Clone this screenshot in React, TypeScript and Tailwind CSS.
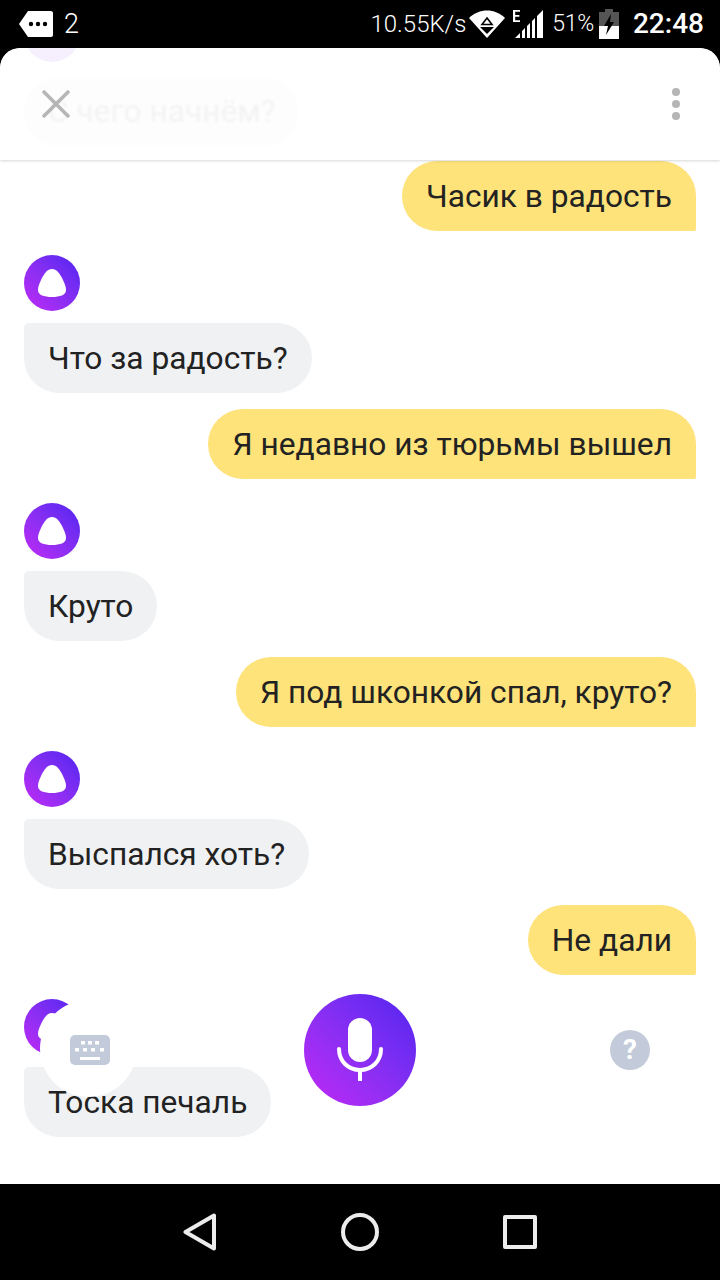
import { ReactNode } from "react";

const font = { fontFamily: "Roboto, sans-serif" };

function AliceAvatar() {
    return (
        <div className="w-14 h-14 rounded-full bg-gradient-to-tr from-[#c026f5] to-[#4f22f0] flex items-center justify-center">
            <svg width="28" height="28" viewBox="0 0 28 28">
                <path d="M14 0C18.500 0 21.500 4 24.500 10C27 15 28 18 28 21C28 26 22 28 14 28C6 28 0 26 0 21C0 18 1 15 3.500 10C6.500 4 9.500 0 14 0Z" fill="white" />
            </svg>
        </div>
    );
}

function Alice({ children }: { children: ReactNode }) {
    return (
        <div className="flex flex-col items-start gap-3 mt-6">
            <AliceAvatar />
            <div className="h-[70px] flex items-center px-6 pt-[2px] bg-[#eff1f3] rounded-[35px] rounded-tl-[5px] text-[31.7px] text-[#222222] whitespace-nowrap">
                {children}
            </div>
        </div>
    );
}

function User({ children, first }: { children: ReactNode; first?: boolean }) {
    return (
        <div className={first ? "flex justify-end" : "flex justify-end mt-4"}>
            <div className="h-[70px] flex items-center px-6 pt-[2px] bg-[#fee27a] rounded-[35px] rounded-br-[2px] text-[31.7px] text-[#222222] whitespace-nowrap">
                {children}
            </div>
        </div>
    );
}

function StatusBar() {
    return (
        <div className="h-12 bg-black text-white flex items-center shrink-0 pl-[19px] pr-[16px]">
            <svg width="34" height="26" viewBox="0 0 34 26">
                <path d="M9 0H32C33 0 34 1 34 2V24C34 25 33 26 32 26H9L0 13Z" fill="white" />
                <circle cx="12" cy="13" r="2.2" fill="black" />
                <circle cx="19" cy="13" r="2.2" fill="black" />
                <circle cx="26" cy="13" r="2.2" fill="black" />
            </svg>
            <span className="ml-[11px] text-[27px] font-light">2</span>
            <span className="ml-auto text-[24px] font-light">10.55K/s</span>
            <svg className="ml-[3px]" width="36" height="28" viewBox="0 0 36 28">
                <path d="M0 8C10 -2 26 -2 36 8L18 28Z" fill="white" />
                <path d="M18 8L23 14.5H13Z" fill="none" stroke="black" strokeWidth="1.6" />
                <path d="M11 17H25L18 24Z" fill="black" />
            </svg>
            <svg className="ml-[7px]" width="32" height="28" viewBox="0 0 32 28">
                <path d="M1 0V12H8V10.2H3.2V6.8H7.4V5H3.2V1.8H8V0Z" fill="white" />
                <path d="M3 28L8 23V28ZM10 21L13 18V28H10ZM15 16L18 13V28H15ZM20 11L23 8V28H20ZM25 6L31 0V28H25Z" fill="white" />
            </svg>
            <span className="ml-2 text-[23px] font-light tracking-[-0.3px]">51%</span>
            <svg className="ml-[5px]" width="20" height="30" viewBox="0 0 20 30">
                <path d="M6 0H14V3H20V30H0V3H6Z" fill="#555555" />
                <path d="M0 17H20V30H0Z" fill="white" />
                <path d="M12 5L5 17H9L7 26L15 13H11Z" fill="black" />
            </svg>
            <span className="ml-[14px] text-[28px] font-medium">22:48</span>
        </div>
    );
}

function NavBar() {
    return (
        <div className="h-24 bg-black shrink-0 flex items-center justify-center gap-[124px] text-[#ececec]">
            <svg width="34" height="38" viewBox="0 0 34 38" fill="none" stroke="currentColor" strokeWidth="4" strokeLinejoin="round">
                <path d="M2.5 19L31 2.5V35.5Z" />
            </svg>
            <svg width="38" height="38" viewBox="0 0 38 38" fill="none" stroke="currentColor" strokeWidth="4">
                <circle cx="19" cy="19" r="17" />
            </svg>
            <svg width="34" height="34" viewBox="0 0 34 34" fill="none" stroke="currentColor" strokeWidth="4" strokeLinejoin="round">
                <rect x="2" y="2" width="30" height="30" />
            </svg>
        </div>
    );
}

function Header() {
    return (
        <div className="absolute top-0 inset-x-0 h-28 bg-white rounded-t-[20px] shadow-[0_1px_3px_rgba(0,0,0,0.16)] overflow-hidden">
            <div className="absolute left-6 top-[-42px] w-14 h-14 rounded-full bg-[#f6effd]" />
            <div className="absolute left-6 top-[30px] h-[68px] w-[274px] rounded-[34px] bg-[#fdfdfd] flex items-center pl-6 text-[31.7px] text-[#f3f3f3] blur-[1px] whitespace-nowrap">
                С чего начнём?
            </div>
            <svg className="absolute left-[42px] top-[42px]" width="28" height="28" viewBox="0 0 28 28" stroke="#b5b5b5" strokeWidth="3.5">
                <path d="M1 1L27 27M27 1L1 27" />
            </svg>
            <div className="absolute right-10 top-10 flex flex-col gap-1">
                <div className="w-2 h-2 rounded-full bg-[#b5b5b5]" />
                <div className="w-2 h-2 rounded-full bg-[#b5b5b5]" />
                <div className="w-2 h-2 rounded-full bg-[#b5b5b5]" />
            </div>
        </div>
    );
}

function Controls() {
    return (
        <>
            <div className="absolute left-10 top-[952px] w-[97px] h-[97px] rounded-full bg-white flex items-center justify-center pl-[3px] pt-[2px]">
                <svg width="40" height="30" viewBox="0 0 40 30">
                    <rect width="40" height="30" rx="5" fill="#c3cbdb" />
                    <g fill="white">
                        <rect x="11" y="6" width="4" height="3.5" />
                        <rect x="18" y="6" width="4" height="3.5" />
                        <rect x="25" y="6" width="4" height="3.5" />
                        <rect x="5" y="13" width="4" height="3.5" />
                        <rect x="13" y="13" width="4" height="3.5" />
                        <rect x="21" y="13" width="4" height="3.5" />
                        <rect x="30" y="13" width="4" height="3.5" />
                        <rect x="10" y="22" width="20" height="3" />
                    </g>
                </svg>
            </div>
            <div className="absolute left-[304px] top-[946px] w-28 h-28 rounded-full bg-gradient-to-tr from-[#c026f5] to-[#4f22f0] flex items-center justify-center">
                <svg width="46" height="64" viewBox="0 0 46 64" fill="none">
                    <rect x="11" y="0" width="24" height="44" rx="12" fill="white" />
                    <path d="M2 31C2 43 11 52 23 52C35 52 44 43 44 31" stroke="white" strokeWidth="4" strokeLinecap="round" />
                    <path d="M23 52V63" stroke="white" strokeWidth="4" />
                </svg>
            </div>
            <div className="absolute left-[610px] top-[982px] w-10 h-10 rounded-full bg-[#c3cbdb] flex items-center justify-center text-white text-[28px] font-bold">
                ?
            </div>
        </>
    );
}

export default function App() {
    return (
        <div className="w-[720px] h-[1280px] bg-black flex flex-col overflow-hidden" style={font}>
            <StatusBar />
            <div className="relative flex-1 bg-white rounded-t-[20px] overflow-hidden">
                <div className="px-6 pt-[113px]">
                    <User first>Часик в радость</User>
                    <Alice>Что за радость?</Alice>
                    <User>Я недавно из тюрьмы вышел</User>
                    <Alice>Круто</Alice>
                    <User>Я под шконкой спал, круто?</User>
                    <Alice>Выспался хоть?</Alice>
                    <User>Не дали</User>
                    <Alice>Тоска печаль</Alice>
                </div>
                <Header />
                <Controls />
            </div>
            <NavBar />
        </div>
    );
}
